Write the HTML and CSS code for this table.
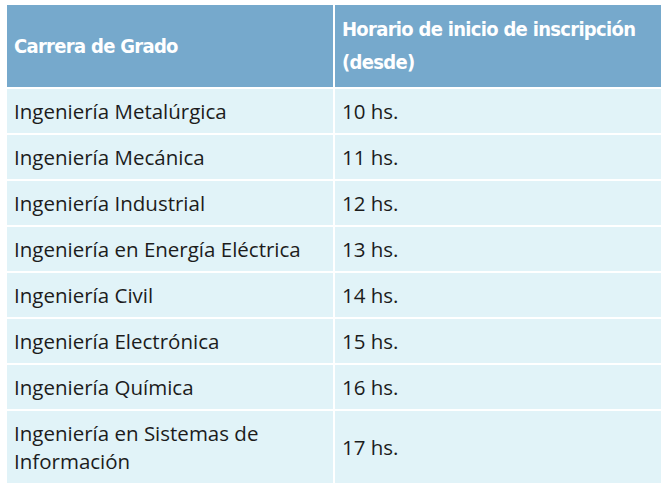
FILE: index.html
```html
<!DOCTYPE html>
<html lang="es">
<head>
<meta charset="utf-8">
<link rel="stylesheet" href="styles.css">
</head>
<body>
<table class="schedule">
  <thead>
    <tr>
      <th class="col-career">Carrera de Grado</th>
      <th class="col-time">Horario de inicio de inscripción (desde)</th>
    </tr>
  </thead>
  <tbody>
    <tr><td>Ingeniería Metalúrgica</td><td>10 hs.</td></tr>
    <tr><td>Ingeniería Mecánica</td><td>11 hs.</td></tr>
    <tr><td>Ingeniería Industrial</td><td>12 hs.</td></tr>
    <tr><td>Ingeniería en Energía Eléctrica</td><td>13 hs.</td></tr>
    <tr><td>Ingeniería Civil</td><td>14 hs.</td></tr>
    <tr><td>Ingeniería Electrónica</td><td>15 hs.</td></tr>
    <tr><td>Ingeniería Química</td><td>16 hs.</td></tr>
    <tr><td>Ingeniería en Sistemas de<br>Información</td><td>17 hs.</td></tr>
  </tbody>
</table>
</body>
</html>
```
FILE: styles.css
```css
html, body {
  margin: 0;
  background: #ffffff;
}
body {
  padding: 5px 0 0 7px;
}
.schedule {
  border-collapse: collapse;
  width: 654px;
  table-layout: fixed;
}
.schedule th,
.schedule td {
  border: 2px solid #ffffff;
  text-align: left;
  vertical-align: middle;
}
.schedule tr:first-child th { border-top: 0; }
.schedule th:first-child, .schedule td:first-child { border-left: 0; }
.schedule th:last-child, .schedule td:last-child { border-right: 0; }
.schedule tr:last-child td { border-bottom: 0; }
.schedule th {
  background: #76a9cc;
  color: #ffffff;
  font-family: "DejaVu Sans Condensed", "DejaVu Sans", sans-serif;
  font-weight: bold;
  font-size: 20px;
  letter-spacing: -0.7px;
  line-height: 33px;
  padding: 8px 7px;
  height: 66px;
}
.col-career { width: 312px; }
.schedule td {
  background: #e1f3f8;
  color: #1c1c1c;
  font-family: "Open Sans", "Noto Sans", sans-serif;
  font-size: 20.5px;
  line-height: 28px;
  padding: 8px 7px;
}
```
